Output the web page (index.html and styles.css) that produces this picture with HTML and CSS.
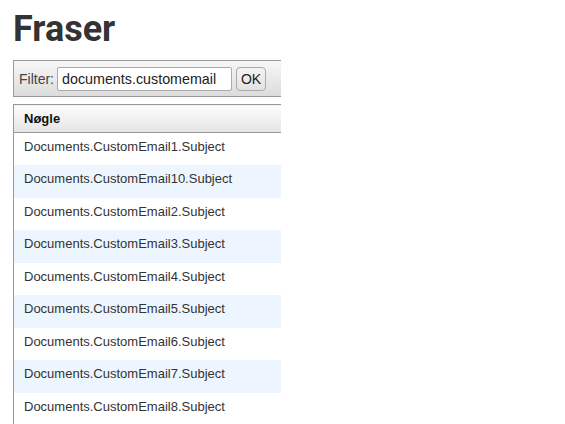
FILE: index.html
```html
<!DOCTYPE html>
<html lang="da">
<head>
<meta charset="utf-8">
<title>Fraser</title>
<link rel="stylesheet" href="styles.css">
</head>
<body>
<h1 class="title">Fraser</h1>
<div class="clip">
  <div class="filterbar">
    <label class="filter-label" for="f">Filter:</label>
    <input id="f" class="filter-input" type="text" value="documents.customemail">
    <button class="ok-btn" type="button">OK</button>
  </div>
  <table class="grid">
    <thead>
      <tr><th>Nøgle</th></tr>
    </thead>
    <tbody>
      <tr><td>Documents.CustomEmail1.Subject</td></tr>
      <tr><td>Documents.CustomEmail10.Subject</td></tr>
      <tr><td>Documents.CustomEmail2.Subject</td></tr>
      <tr><td>Documents.CustomEmail3.Subject</td></tr>
      <tr><td>Documents.CustomEmail4.Subject</td></tr>
      <tr><td>Documents.CustomEmail5.Subject</td></tr>
      <tr><td>Documents.CustomEmail6.Subject</td></tr>
      <tr><td>Documents.CustomEmail7.Subject</td></tr>
      <tr><td>Documents.CustomEmail8.Subject</td></tr>
    </tbody>
  </table>
</div>
</body>
</html>
```
FILE: styles.css
```css
html, body {
  margin: 0;
  padding: 0;
  background: #fff;
}
body {
  padding: 0 0 0 13px;
  font-family: "Liberation Sans", Arial, sans-serif;
  color: #333;
  overflow: hidden;
}
.title {
  font-family: Roboto, "Liberation Sans", sans-serif;
  font-weight: 700;
  font-size: 36px;
  line-height: 44px;
  margin: 7px 0 9px 0;
  color: #333;
}
.clip {
  width: 268px;
  overflow: hidden;
}
.filterbar {
  width: 400px;
  height: 37px;
  box-sizing: border-box;
  border: 1px solid #999;
  background: linear-gradient(#f7f7f7, #dcdcdc);
  display: flex;
  align-items: center;
  padding: 0 0 0 5px;
  margin-bottom: 7px;
}
.filter-label {
  font-size: 14px;
  color: #444;
  margin-right: 3px;
}
.filter-input {
  width: 175px;
  height: 24px;
  box-sizing: border-box;
  border: 1px solid #aaa;
  border-radius: 2px;
  padding: 0 4px;
  font-family: "Liberation Sans", Arial, sans-serif;
  font-size: 14.3px;
  color: #222;
  background: #fff;
  margin: 0;
}
.ok-btn {
  margin-left: 4px;
  width: 30px;
  height: 24px;
  box-sizing: border-box;
  border: 1px solid #aaa;
  border-radius: 4px;
  background: linear-gradient(#f4f4f4, #e2e2e2);
  font-family: "Liberation Sans", Arial, sans-serif;
  font-size: 14px;
  color: #222;
  padding: 0;
}
.grid {
  width: 400px;
  border-collapse: collapse;
  border-left: 1px solid #999;
  border-top: 1px solid #999;
}
.grid th {
  text-align: left;
  font-size: 13px;
  font-weight: 700;
  color: #111;
  height: 27px;
  padding: 0 0 0 10px;
  background: linear-gradient(#fdfdfd, #e4e4e4);
  border-bottom: 1px solid #999;
}
.grid td {
  font-size: 13px;
  color: #333;
  height: 32.5px;
  padding: 0 0 0 10px;
  vertical-align: top;
  padding-top: 6px;
  box-sizing: border-box;
}
.grid tbody tr:nth-child(even) td {
  background: #edf6fe;
}
```
